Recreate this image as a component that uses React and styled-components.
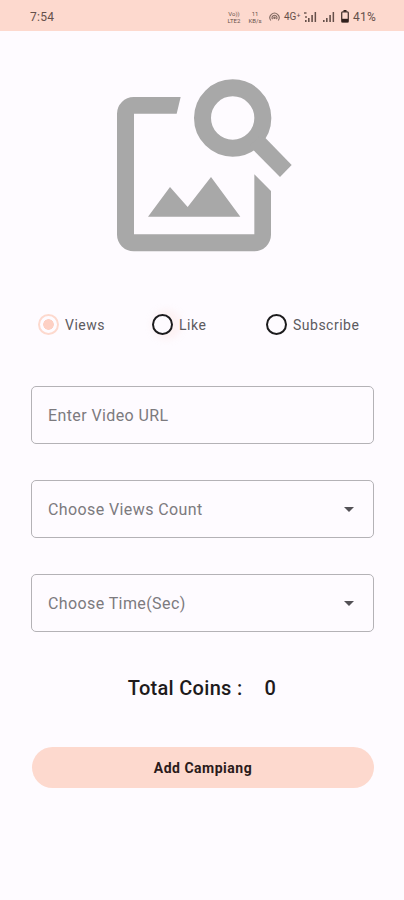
import React, { useState } from "react";
import styled, { createGlobalStyle } from "styled-components";

const options = ["Views", "Like", "Subscribe"];

function Signal({ roaming }) {
  return (
    <svg width="13" height="12" viewBox="0 0 13 12" fill="#65504a">
      {roaming && <path d="M0 1h2.5v2H0zM1 5h2v2H1z" opacity="0.7" />}
      <path d="M1 9h1.6v2H1zM4 7h1.6v4H4zM7.3 4h1.6v7H7.3zM10.6 1h1.5v10h-1.5z" />
    </svg>
  );
}

function StatusBar() {
  return (
    <Bar>
      <Clock>7:54</Clock>
      <StatusIcons>
        <Stack $width={14} $gap={6}>
          <span>Vo))</span>
          <span>LTE2</span>
        </Stack>
        <Stack $width={16} $gap={6}>
          <span>11</span>
          <span>KB/s</span>
        </Stack>
        <Slot $width={11} $gap={4}>
          <svg
            width="11"
            height="10"
            viewBox="0 0 11 10"
            fill="none"
            stroke="#806860"
            strokeWidth="1.1"
          >
            <path d="M1.8 8.5A4.6 4.6 0 1 1 9.2 8.5M3.6 7.2A2.4 2.4 0 1 1 7.4 7.2" />
            <circle cx="5.5" cy="5.8" r="0.7" />
          </svg>
        </Slot>
        <Network>4G⁺</Network>
        <Slot $width={13} $gap={5}>
          <Signal roaming />
        </Slot>
        <Slot $width={13} $gap={6}>
          <Signal />
        </Slot>
        <Slot $width={8} $gap={4}>
          <svg width="8" height="13" viewBox="0 0 8 13">
            <path d="M2.5 0h3v2h-3z" fill="#30211e" />
            <rect
              x="0.7"
              y="1.8"
              width="6.6"
              height="10.4"
              rx="1"
              fill="none"
              stroke="#4a3833"
              strokeWidth="1.3"
            />
            <path d="M1 8.8h6V12H1z" fill="#30211e" />
          </svg>
        </Slot>
        <Percent>41%</Percent>
      </StatusIcons>
    </Bar>
  );
}

function ImageSearch() {
  return (
    <svg width="175" height="173" viewBox="51 42 525 519" fill="#a8a8a8">
      <path d="M242 96H101a50 50 0 0 0-50 50v363a50 50 0 0 0 50 50h362a50 50 0 0 0 50-50V378l-50-50v180H102V146h128z" />
      <path d="M144 455l66-89 53 60 70-90 88 119z" />
      <circle
        cx="398"
        cy="159"
        r="90.5"
        fill="none"
        stroke="#a8a8a8"
        strokeWidth="51"
      />
      <path d="M461 256l79 80 35-36-78-80-20-5-26 26z" />
    </svg>
  );
}

function Select({ label }) {
  return (
    <Field>
      <Placeholder>{label}</Placeholder>
      <svg width="10" height="5" viewBox="0 0 10 5" fill="#535156">
        <path d="M0 0h10L5 5z" />
      </svg>
    </Field>
  );
}

function App() {
  const [type, setType] = useState("Views");

  return (
    <Screen>
      <GlobalStyle />
      <StatusBar />
      <Picture>
        <ImageSearch />
      </Picture>
      <RadioGroup>
        {options.map((name) => (
          <Option key={name} onClick={() => setType(name)}>
            <Radio $checked={type === name} $halo={name === "Like"} />
            <OptionText>{name}</OptionText>
          </Option>
        ))}
      </RadioGroup>
      <Form>
        <Field>
          <Placeholder>Enter Video URL</Placeholder>
        </Field>
        <Select label="Choose Views Count" />
        <Select label="Choose Time(Sec)" />
      </Form>
      <Total>
        <span>Total Coins :</span>
        <span>0</span>
      </Total>
      <Button>Add Campiang</Button>
    </Screen>
  );
}

export default App;

const GlobalStyle = createGlobalStyle`
  * {
    box-sizing: border-box;
  }
  body {
    margin: 0;
    background: #fefbff;
    font-family: Roboto, sans-serif;
  }
`;

const Screen = styled.div`
  height: 900px;
  width: 404px;
  display: flex;
  flex-direction: column;
  background: #fefbff;
`;

const Bar = styled.div`
  height: 31px;
  display: flex;
  justify-content: space-between;
  align-items: center;
  padding: 2px 27px 0 30px;
  background: #fdd9ce;
  color: #65504a;
`;

const Clock = styled.div`
  font-size: 12px;
  letter-spacing: 0.3px;
`;

const StatusIcons = styled.div`
  display: flex;
  align-items: center;
`;

const Slot = styled.div`
  width: ${(props) => props.$width}px;
  margin-right: ${(props) => props.$gap}px;
  display: flex;
`;

const Stack = styled(Slot)`
  flex-direction: column;
  align-items: center;
  font-size: 6px;
  line-height: 7px;
  white-space: nowrap;
`;

const Network = styled.div`
  width: 16px;
  margin-right: 4px;
  font-size: 10px;
  white-space: nowrap;
`;

const Percent = styled.div`
  width: 24px;
  font-size: 12px;
  letter-spacing: 0.3px;
  white-space: nowrap;
`;

const Picture = styled.div`
  display: flex;
  padding: 48px 0 0 117px;
`;

const RadioGroup = styled.div`
  display: grid;
  grid-template-columns: 114px 114px 1fr;
  margin-top: 62px;
  padding-left: 37.5px;
`;

const Option = styled.div`
  display: flex;
  align-items: center;
  height: 21px;
  cursor: pointer;
`;

const Radio = styled.div`
  width: 21px;
  height: 21px;
  border-radius: 50%;
  border: 2px solid ${(props) => (props.$checked ? "#fdd9ce" : "#1c1b1d")};
  background: ${(props) =>
    props.$checked
      ? "radial-gradient(circle, #fdd0c4 5px, transparent 5.6px)"
      : "transparent"};
  box-shadow: ${(props) =>
    props.$halo ? "4px 0 7px 4px rgba(253, 217, 206, 0.25)" : "none"};
`;

const OptionText = styled.div`
  margin-left: 6.5px;
  color: #5c5a5e;
  font-size: 14px;
  letter-spacing: 0.5px;
`;

const Form = styled.div`
  display: flex;
  flex-direction: column;
  gap: 36px;
  margin: 51px 30px 0 31px;
`;

const Field = styled.div`
  height: 58px;
  display: flex;
  justify-content: space-between;
  align-items: center;
  padding: 0 19px 0 16px;
  border: 1px solid #b4b2b6;
  border-radius: 5px;
`;

const Placeholder = styled.div`
  color: #7c7a7e;
  font-size: 16px;
  letter-spacing: 0.4px;
`;

const Total = styled.div`
  display: flex;
  justify-content: center;
  gap: 22px;
  margin-top: 44px;
  color: #201a1b;
  font-size: 20px;
  line-height: 24px;
  font-weight: 500;
  letter-spacing: 0.3px;
`;

const Button = styled.button`
  height: 41px;
  margin: 47px 30px 0 32px;
  border: none;
  border-radius: 21px;
  background: #fdd9ce;
  color: #2b1b1b;
  font-family: inherit;
  font-size: 14px;
  font-weight: 700;
  letter-spacing: 0.5px;
  cursor: pointer;
`;
